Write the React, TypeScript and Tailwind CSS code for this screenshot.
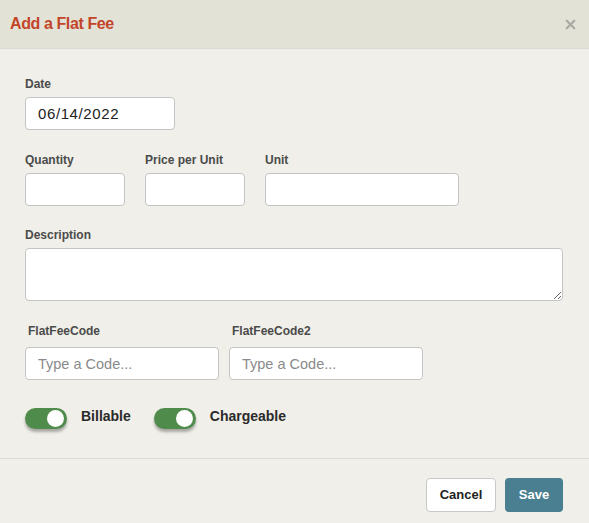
import { X } from 'lucide-react'

function Field({ label, className, children }: { label: string; className?: string; children: React.ReactNode }) {
  return (
    <div className={className}>
      <div className="text-[12px] font-bold text-[#4b4b4b] mb-[6px] leading-[14px]">{label}</div>
      {children}
    </div>
  )
}

const inputCls =
  'h-[33px] rounded-[4px] border border-[#c4c4c4] bg-white px-3 text-[14.5px] text-[#222] outline-none placeholder:text-[#8a8a8a]'

function Toggle({ label }: { label: string }) {
  return (
    <div className="flex items-start gap-[14px]">
      <div className="relative w-[42px] h-[21px] rounded-full bg-[#4f8c4b] shadow-[0_3px_3px_rgba(0,0,0,0.3)] mt-[5px]">
        <div className="absolute right-[3px] top-[2px] w-[17px] h-[17px] rounded-full bg-white" />
      </div>
      <span className="text-[14px] font-bold text-[#2a2a2a] leading-[16px] mt-[5px]">{label}</span>
    </div>
  )
}

export default function App() {
  return (
    <div className="w-[589px] h-[523px] bg-[#f0efe9] font-['Liberation_Sans',Arial,sans-serif] flex flex-col">
      <div className="h-[49px] bg-[#e3e2d7] border-b border-[#dcdbd1] flex items-center justify-between pl-[10px] pr-[11px]">
        <h1 className="text-[16px] font-bold text-[#c2452a] tracking-[-0.4px]">Add a Flat Fee</h1>
        <X size={15} strokeWidth={3.5} className="text-[#a9a9a3]" />
      </div>

      <div className="px-[25px] pt-[28px] flex-1">
        <Field label="Date">
          <input className={`${inputCls} w-[150px] !text-[15px] tracking-[0.6px]`} defaultValue="06/14/2022" />
        </Field>

        <div className="flex gap-[20px] mt-[23px]">
          <Field label="Quantity">
            <input className={`${inputCls} w-[100px]`} />
          </Field>
          <Field label="Price per Unit">
            <input className={`${inputCls} w-[100px]`} />
          </Field>
          <Field label="Unit">
            <input className={`${inputCls} w-[194px]`} />
          </Field>
        </div>

        <Field label="Description" className="mt-[22px]">
          <textarea className="block w-[538px] h-[53px] rounded-[4px] border border-[#c4c4c4] bg-white px-3 py-2 text-[14px] outline-none" />
        </Field>

        <div className="flex gap-[10px] mt-[23px]">
          <Field label="FlatFeeCode" className="[&>div]:pl-[3px] [&>div]:mb-[9px]">
            <input className={`${inputCls} w-[194px]`} placeholder="Type a Code..." />
          </Field>
          <Field label="FlatFeeCode2" className="[&>div]:pl-[3px] [&>div]:mb-[9px]">
            <input className={`${inputCls} w-[194px]`} placeholder="Type a Code..." />
          </Field>
        </div>

        <div className="flex gap-[23px] mt-[23px]">
          <Toggle label="Billable" />
          <Toggle label="Chargeable" />
        </div>
      </div>

      <div className="border-t border-[#dddcd4] h-[65px] flex items-start justify-end gap-[9px] pr-[26px] pt-[19px]">
        <button className="h-[34px] w-[70px] rounded-[4px] border border-[#c8c8c8] bg-white text-[13px] font-bold text-[#222]">
          Cancel
        </button>
        <button className="h-[34px] w-[58px] rounded-[4px] bg-[#4a7f91] text-[13px] font-bold text-white">
          Save
        </button>
      </div>
    </div>
  )
}
